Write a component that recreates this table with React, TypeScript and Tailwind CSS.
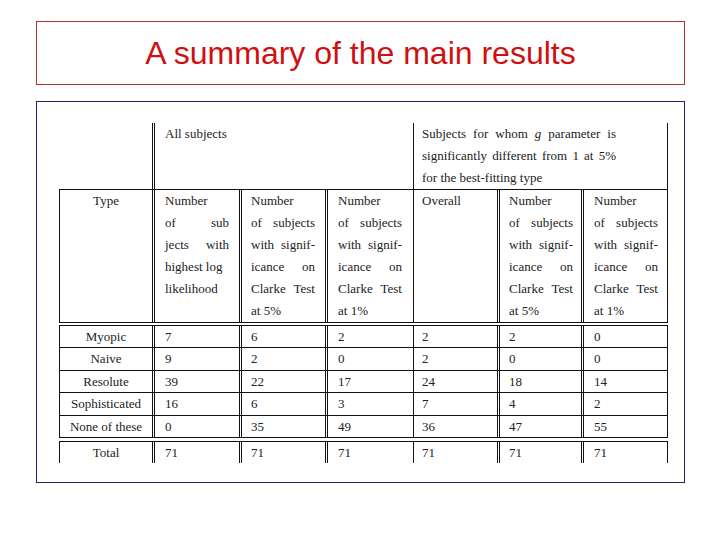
import React from "react";

type Line = { t: React.ReactNode; j?: boolean };

const numberLines = (last: string): Line[] => [
  { t: "Number" },
  { t: "of subjects", j: true },
  { t: "with signif-", j: true },
  { t: "icance on", j: true },
  { t: "Clarke Test", j: true },
  { t: last },
];

const allLines: Line[] = [
  { t: "Number" },
  { t: "of sub", j: true },
  { t: "jects with", j: true },
  { t: "highest log" },
  { t: "likelihood" },
];

const rows: [string, number[]][] = [
  ["Myopic", [7, 6, 2, 2, 2, 0]],
  ["Naive", [9, 2, 0, 2, 0, 0]],
  ["Resolute", [39, 22, 17, 24, 18, 14]],
  ["Sophisticated", [16, 6, 3, 7, 4, 2]],
  ["None of these", [0, 35, 49, 36, 47, 55]],
];

// right border of each column: double or single
const colRight = [
  "border-r-[3px] border-double",
  "border-r-[3px] border-double",
  "border-r-[3px] border-double",
  "border-r",
  "border-r-[3px] border-double",
  "border-r-[3px] border-double",
  "border-r",
];
const colPad = ["", "pl-[10px]", "pl-[9px]", "pl-[10px]", "pl-[8px]", "pl-[9px]", "pl-[10px]"];

function Lines({ lines }: { lines: Line[] }) {
  return (
    <div className="w-[64px]">
      {lines.map((l, i) => (
        <div
          key={i}
          className={l.j ? "text-justify [text-align-last:justify] whitespace-nowrap" : "whitespace-nowrap"}
        >
          {l.t}
        </div>
      ))}
    </div>
  );
}

function DataRow({ name, vals, top, bottom = true }: { name: string; vals: number[]; top?: boolean; bottom?: boolean }) {
  const edge = `${top ? "border-t" : ""} ${bottom ? "border-b" : ""}`;
  return (
    <tr className="leading-[21.4px]">
      <td className={`border-l text-center ${colRight[0]} ${edge} border-[#111] p-0`}>{name}</td>
      {vals.map((v, i) => (
        <td key={i} className={`${colRight[i + 1]} ${colPad[i + 1]} ${edge} border-[#111] p-0 align-top`}>
          {v}
        </td>
      ))}
    </tr>
  );
}

export default function App() {
  return (
    <div className="w-[720px] h-[540px] bg-white pt-[21px] pl-[36px]">
      <div className="w-[649px] h-[64px] border border-[#b03030] flex items-center justify-center">
        <h1 className="font-['Liberation_Sans',Arial,sans-serif] text-[32px] leading-none text-[#d01010] pb-[1px]">
          A summary of the main results
        </h1>
      </div>

      <div className="mt-[16px] w-[649px] h-[382px] border border-[#20206e] pt-[21px] pl-[22px]">
        <table className="table-fixed border-separate border-spacing-0 w-[609px] font-['Liberation_Serif','Times_New_Roman',serif] text-[13px] leading-[22px] text-[#222]">
          <colgroup>
            <col className="w-[96px]" />
            <col className="w-[87px]" />
            <col className="w-[86px]" />
            <col className="w-[86px]" />
            <col className="w-[86px]" />
            <col className="w-[84px]" />
            <col className="w-[84px]" />
          </colgroup>
          <tbody>
            {/* top header: column groups */}
            <tr>
              <td className="border-r-[3px] border-double border-[#111] p-0" />
              <td colSpan={3} className="border-r border-[#111] pl-[10px] p-0 align-top h-[66px]">
                All subjects
              </td>
              <td colSpan={3} className="border-r border-[#111] pl-[8px] p-0 align-top">
                <div className="w-[194px]">
                  <div className="text-justify [text-align-last:justify] whitespace-nowrap">
                    Subjects for whom <i>g</i> parameter is
                  </div>
                  <div className="text-justify [text-align-last:justify] whitespace-nowrap">
                    significantly different from 1 at 5%
                  </div>
                  <div className="whitespace-nowrap">for the best-fitting type</div>
                </div>
              </td>
            </tr>

            {/* second header: column titles */}
            <tr>
              <td className={`border-l border-t border-b ${colRight[0]} border-[#111] p-0 text-center align-top`}>
                Type
              </td>
              <td className={`border-t border-b ${colRight[1]} ${colPad[1]} border-[#111] p-0 align-top`}>
                <Lines lines={allLines} />
              </td>
              <td className={`border-t border-b ${colRight[2]} ${colPad[2]} border-[#111] p-0 align-top`}>
                <Lines lines={numberLines("at 5%")} />
              </td>
              <td className={`border-t border-b ${colRight[3]} ${colPad[3]} border-[#111] p-0 align-top`}>
                <Lines lines={numberLines("at 1%")} />
              </td>
              <td className={`border-t border-b ${colRight[4]} ${colPad[4]} border-[#111] p-0 align-top`}>
                Overall
              </td>
              <td className={`border-t border-b ${colRight[5]} ${colPad[5]} border-[#111] p-0 align-top`}>
                <Lines lines={numberLines("at 5%")} />
              </td>
              <td className={`border-t border-b ${colRight[6]} ${colPad[6]} border-[#111] p-0 align-top h-[134px]`}>
                <Lines lines={numberLines("at 1%")} />
              </td>
            </tr>

            <tr>
              <td colSpan={7} className="h-[2px] p-0" />
            </tr>

            {rows.map(([name, vals], i) => (
              <DataRow key={name} name={name} vals={vals} top={i === 0} />
            ))}

            <tr>
              <td colSpan={7} className="h-[3px] p-0" />
            </tr>

            <DataRow name="Total" vals={[71, 71, 71, 71, 71, 71]} top bottom={false} />
          </tbody>
        </table>
      </div>
    </div>
  );
}
